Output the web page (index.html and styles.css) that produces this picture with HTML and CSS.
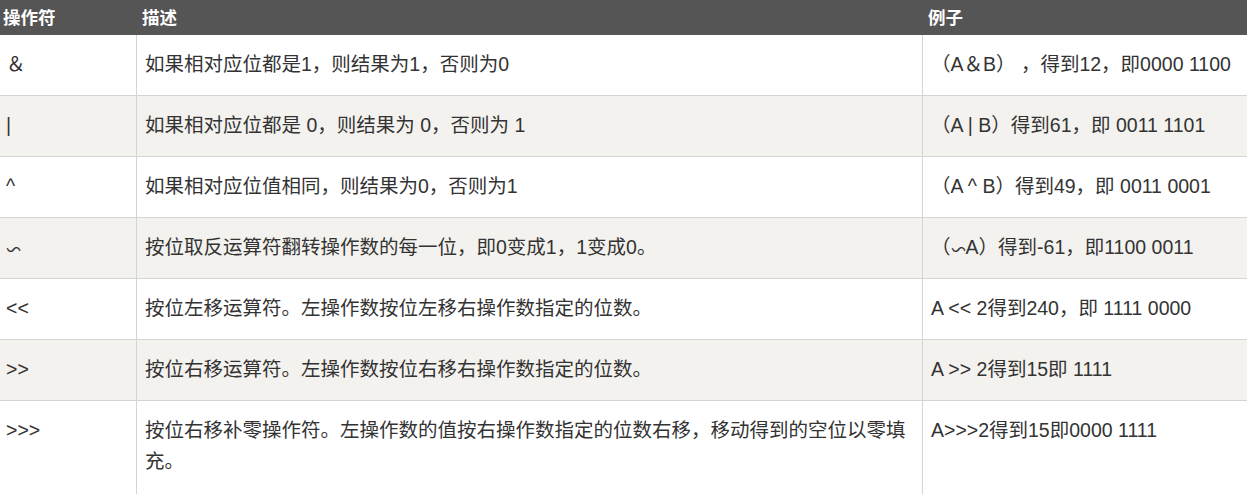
FILE: index.html
```html
<!DOCTYPE html>
<html lang="zh-CN">
<head>
<meta charset="utf-8">
<title>位运算符</title>
<link rel="stylesheet" href="styles.css">
</head>
<body>
<table class="ops">
  <colgroup>
    <col class="c-op">
    <col class="c-desc">
    <col class="c-ex">
  </colgroup>
  <thead>
    <tr><th>操作符</th><th>描述</th><th>例子</th></tr>
  </thead>
  <tbody>
    <tr><td>＆</td><td>如果相对应位都是1，则结果为1，否则为0</td><td>（A＆B） ，得到12，即0000 1100</td></tr>
    <tr><td>|</td><td>如果相对应位都是 0，则结果为 0，否则为 1</td><td>（A | B）得到61，即 0011 1101</td></tr>
    <tr><td>^</td><td>如果相对应位值相同，则结果为0，否则为1</td><td>（A ^ B）得到49，即 0011 0001</td></tr>
    <tr><td><span class="wave">〜</span></td><td>按位取反运算符翻转操作数的每一位，即0变成1，1变成0。</td><td>（<span class="wave">〜</span>A）得到-61，即1100 0011</td></tr>
    <tr><td>&lt;&lt;</td><td>按位左移运算符。左操作数按位左移右操作数指定的位数。</td><td>A &lt;&lt; 2得到240，即 1111 0000</td></tr>
    <tr><td>&gt;&gt;</td><td>按位右移运算符。左操作数按位右移右操作数指定的位数。</td><td>A &gt;&gt; 2得到15即 1111</td></tr>
    <tr><td>&gt;&gt;&gt;</td><td>按位右移补零操作符。左操作数的值按右操作数指定的位数右移，移动得到的空位以零填充。</td><td>A&gt;&gt;&gt;2得到15即0000 1111</td></tr>
  </tbody>
</table>
</body>
</html>
```
FILE: styles.css
```css
html, body {
  margin: 0;
  padding: 0;
  background: #fff;
  overflow: hidden;
}
body {
  font-family: "Liberation Sans", "Noto Sans CJK SC", sans-serif;
  color: #333;
}
.ops {
  border-collapse: collapse;
  table-layout: fixed;
  width: 1325px;
  margin-left: -3px;
}
.c-op { width: 139px; }
.c-desc { width: 786px; }
.c-ex { width: 400px; }
.ops th {
  background: #555;
  color: #fff;
  font-size: 17.5px;
  font-weight: bold;
  text-align: left;
  height: 34px;
  padding: 0 5px;
  line-height: 24px;
  border: 1px solid #555;
  box-sizing: border-box;
}
.ops td {
  font-size: 19.5px;
  line-height: 31px;
  padding: 14px 8px 15px;
  border: 1px solid #d4d4d4;
  vertical-align: top;
}
.ops tbody tr:last-child td {
  padding-bottom: 20px;
}
.ops tbody tr:nth-child(even) td {
  background: #f3f2ef;
}
.wave {
  display: inline-block;
  font-family: "Noto Sans CJK SC", sans-serif;
  font-size: 15px;
  transform: scaleX(-1) translateY(1px);
}
```
